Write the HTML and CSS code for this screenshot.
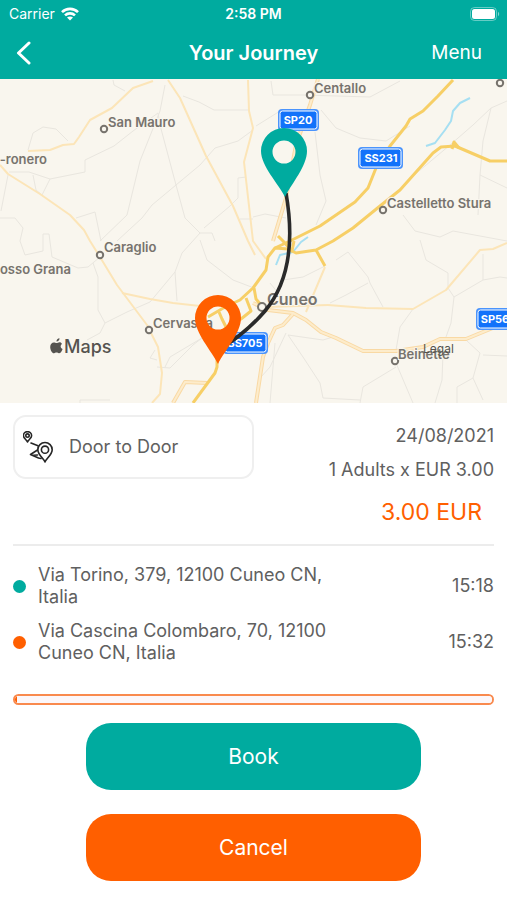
FILE: index.html
```html
<!DOCTYPE html>
<html lang="en">
<head>
  <meta charset="UTF-8" />
  <meta name="viewport" content="width=device-width, initial-scale=1.0"/>
  <title>Your Journey</title>
  <link rel="stylesheet" href="styles.css">
</head>
<body>
<header class="header">
  <div class="status">
    <div class="carrier">
      <span>Carrier</span>
      <svg width="18" height="14" viewBox="0 0 18 14" fill="none" stroke="#fff" stroke-width="2.6">
        <path d="M1 5.2C5.4.8 12.6.8 17 5.2"/>
        <path d="M4 8.4c2.8-2.7 7.2-2.7 10 0"/>
        <path d="M9 13.6 6 10.6c1.7-1.5 4.3-1.5 6 0z" fill="#fff" stroke="none"/>
      </svg>
    </div>
    <span class="clock">2:58 PM</span>
    <svg class="battery" width="30" height="14" viewBox="0 0 30 14">
      <rect x="0.5" y="0.5" width="26" height="13" rx="4" fill="none" stroke="#fff" stroke-opacity="0.4"/>
      <rect x="2" y="2" width="23" height="10" rx="2.5" fill="#fff"/>
      <path d="M28 4.8c1.6.8 1.6 3.6 0 4.4z" fill="#fff" fill-opacity="0.5"/>
    </svg>
  </div>
  <nav class="navbar">
    <button class="back" type="button" aria-label="Back">
      <svg width="15" height="24" viewBox="0 0 15 24" fill="none" stroke="#fff" stroke-width="3" stroke-linecap="round" stroke-linejoin="round"><path d="M13 2 2.500 12 13 22"/></svg>
    </button>
    <h1>Your Journey</h1>
    <button class="menu" type="button">Menu</button>
  </nav>
</header>

<main>
  <svg class="map" viewBox="0 0 507 324" role="img" aria-label="Route map">
    <rect width="507" height="324" fill="#f9f6ee"/>

    <!-- minor roads -->
    <g class="minor">
      <path d="M113 1 114 6 125 12"/>
      <path d="M165 6 160 32 140 82 127 136 100 162"/>
      <path d="M158 34 160 46 176 106 185 139 200 154 212 154 215 162"/>
      <path d="M117 162 142 139 152 126 176 106 200 86 215 69 238 62 253 51"/>
      <path d="M183 17 199 23 214 31 248 31"/>
      <path d="M9 93 29 93 50 100 85 93 85 81 114 67 133 52 158 34"/>
      <path d="M28 71 33 54 43 48 56 50 68 62"/>
      <path d="M8 96 1 132M0 139 15 139 23 149 20 162M76 139 95 133 101 162M33 96 36 111 42 116 50 100"/>
      <path d="M204 149 230 127 238 119 238 99 246 98M240 140 253 140"/>
      <path d="M20 162 25 176 43 172 43 155 49 155 52 178 78 189 88 188 100 178"/>
      <path d="M93 184 98 198 98 231 105 244 100 254 87 261"/>
      <path d="M105 244 127 233 150 223 175 193 182 174 200 154M175 193 177 222"/>
      <path d="M200 161 207 181 233 201 254 209"/>
      <path d="M155 271 150 279 157 281M157 288 170 289 193 266 202 259 170 278 165 288M80 324 80 321 110 321"/>
      <path d="M271 2 273 16 303 16 370 18 400 2M256 47 280 32"/>
      <path d="M315 53 320 96 326 122 316 146M321 31 336 49 360 59 386 62 410 47"/>
      <path d="M507 22 491 29 473 46 450 66 413 97M491 29 483 62 480 96 507 109M480 96 478 136"/>
      <path d="M403 136 415 152 440 158 453 152 507 162M253 138 265 135 286 139"/>
      <path d="M336 181 348 173 368 198 370 204 383 228M368 204 346 216 330 224"/>
      <path d="M420 161 426 181 448 194 448 209 454 218 451 244 446 258"/>
      <path d="M454 218 483 201 500 198 507 199M483 201 483 175M413 230 400 248 396 271"/>
      <path d="M288 256 303 278 320 304 323 319 360 321M288 256 323 261 333 258M286 254 270 288 261 298"/>
      <path d="M283 201 303 198 325 187M270 204 283 220M275 264 270 324"/>
      <path d="M396 288 363 308 360 324M396 284 413 324M443 274 442 301 435 324"/>
      <path d="M466 261 480 274 473 299 483 321M473 299 457 308 457 324M483 276 507 277"/>
    </g>

    <!-- water -->
    <g class="water">
      <path d="M470 19 460 24 453 32 451 42 445 51 435 64 426 67"/>
      <path d="M308 158 301 163 293 173 280 176 276 186"/>
    </g>

    <!-- local roads -->
    <g class="local">
      <path d="M153 2 133 9 112 29 90 41 79 58 74 65 63 66 50 71 28 72"/>
      <path d="M168 1 180 19 206 77 233 127 248 162 255 176"/>
      <path d="M248 1 249 32 253 49 244 83 253 162 266 180"/>
      <path d="M0 86 8 95 40 115 70 136 84 151 90 162 100 178 117 206 147 246 158 268 162 294 160 315 152 324"/>
      <path d="M122 214 150 220 173 224 200 227"/>
      <path d="M328 226 366 229 413 230 446 211 480 171 493 170 507 164"/>
      <path d="M325 188 306 233M267 228 328 226"/>
    </g>

    <!-- provincial roads -->
    <g class="prov-edge">
      <path d="M273 162 286 119 296 66 310 26 318 0"/>
      <path d="M253 224 268 231 293 234 306 241 321 253 336 259 363 272 396 272 423 268 440 260 466 260 483 253 507 243"/>
      <path d="M293 235 283 246 275 249 268 264 263 278 256 324"/>
      <path d="M207 304 185 303 173 324"/>
    </g>
    <g class="prov-fill">
      <path d="M273 162 286 119 296 66 310 26 318 0"/>
      <path d="M253 224 268 231 293 234 306 241 321 253 336 259 363 272 396 272 423 268 440 260 466 260 483 253 507 243"/>
      <path d="M293 235 283 246 275 249 268 264 263 278 256 324"/>
      <path d="M207 304 185 303 173 324"/>
    </g>

    <!-- main roads -->
    <g class="trunk">
      <path d="M453 1 438 17 423 32 410 40 406 47 390 67 376 89 368 109 355 123 320 147 290 162 275 169"/>
      <path d="M507 82 490 82 455 67 441 68 433 74 400 111 380 127 353 149 333 162 316 171 296 174 288 170 275 169 268 178 266 191 253 209 240 221 225 228 208 238"/>
      <path d="M452 70 454 63 459 69M316 171 325 187M278 157 283 162 292 172 294 162"/>
      <path d="M254 209 256 220 262 227M246 219 251 232 241 240 232 245M219 233 222 240 226 248 218 260"/>
      <path d="M217 278 217 288 215 294 193 324"/>
    </g>

    <!-- towns -->
    <g class="town-dot">
      <circle cx="104" cy="50" r="3.200"/>
      <circle cx="310" cy="16" r="3.200"/>
      <circle cx="500" cy="4" r="3.200"/>
      <circle cx="383" cy="131" r="3.200"/>
      <circle cx="100" cy="176" r="3.200"/>
      <circle cx="149" cy="251" r="3.200"/>
      <circle cx="262" cy="228" r="4"/>
      <circle cx="395" cy="282" r="3.200"/>
    </g>
    <g class="town">
      <text x="108" y="48">San Mauro</text>
      <text x="47" y="85" text-anchor="end">-ronero</text>
      <text x="314" y="14">Centallo</text>
      <text x="387" y="129">Castelletto Stura</text>
      <text x="104" y="173">Caraglio</text>
      <text x="71" y="195" text-anchor="end">osso Grana</text>
      <text x="153" y="249">Cervasca</text>
      <text x="398" y="280">Beinette</text>
      <text class="city" x="267" y="226">Cuneo</text>
    </g>
    <a href="#legal"><text class="legal" x="423" y="274">Legal</text></a>

    <!-- road signs -->
    <g class="sign">
      <rect class="halo" x="278" y="30" width="41" height="22" rx="4"/>
      <rect x="280" y="32" width="37" height="18" rx="2.500"/>
      <text x="298" y="45">SP20</text>
      <rect class="halo" x="358" y="68" width="45" height="22" rx="4"/>
      <rect x="360" y="70" width="41" height="18" rx="2.500"/>
      <text x="381" y="83">SS231</text>
      <rect class="halo" x="476" y="229" width="41" height="22" rx="4"/>
      <rect x="478" y="231" width="37" height="18" rx="2.500"/>
      <text x="495" y="244">SP56</text>
      <rect class="halo" x="223" y="253" width="45" height="22" rx="4"/>
      <rect x="225" y="255" width="41" height="18" rx="2.500"/>
      <text x="245" y="268">SS705</text>
    </g>

    <!-- journey -->
    <path d="M286 114C294 160 290 202 265 232 252 247 238 259 220 270" fill="none" stroke="#2a2a2a" stroke-width="3.600"/>
    <path fill="#00ab9f" fill-rule="evenodd" d="M285 118C278 104 261 87 261 72a23 23 0 0 1 46 0c0 15-15 32-22 46zM284 61.500a11.500 11.500 0 1 0 0 23 11.500 11.500 0 0 0 0-23z"/>
    <path fill="#ff5f00" fill-rule="evenodd" d="M218 285C211 271 195 254 195 239a23 23 0 0 1 46 0c0 15-16 32-23 46zM218 227.500a11.500 11.500 0 1 0 0 23 11.500 11.500 0 0 0 0-23z"/>

    <!-- map provider -->
    <path fill="#55534f" d="M59.500 259.200c.2 1.700-1.400 3.400-3 3.300-.2-1.700 1.300-3.200 3-3.300zM62 264.900c-2 1.300-1.700 4.100.6 5-.7 2.100-2 4.300-3.700 4.300-1 0-1.300-.6-2.400-.6s-1.500.6-2.400.6c-2.200 0-3.900-3.600-3.900-6.300 0-2.900 1.800-4.500 3.700-4.500 1.100 0 1.900.7 2.700.7.700 0 1.700-.8 3-.8 1 0 1.900.6 2.400 1.600z"/>
    <text class="provider" x="64" y="274">Maps</text>
  </svg>

  <section class="summary">
    <div class="service">
      <svg width="32" height="32" viewBox="0 0 32 32" fill="none" stroke="#262626" stroke-width="1.600" stroke-linejoin="round" stroke-linecap="round">
        <path d="M4.500 11C3.500 8.500.4 7.200.4 4.700a4.100 4.100 0 0 1 8.200 0C8.600 7.200 5.500 8.500 4.500 11z"/>
        <circle cx="4.500" cy="4.600" r="1.700"/>
        <path d="M8 12 15 14.800M14.500 19 7.500 23.500l8 3.500 2.500.5M14.500 24l-4 .2"/>
        <path d="M22 31c-1.500-3.500-7.200-7.500-7.200-12.300a7.200 7.200 0 0 1 14.400 0C29.200 23.500 23.500 27.500 22 31z"/>
        <circle cx="22" cy="18.700" r="3.600"/>
      </svg>
      <span>Door to Door</span>
    </div>
    <div class="fare">
      <div>24/08/2021</div>
      <div>1 Adults x EUR 3.00</div>
      <div class="total">3.00 EUR</div>
    </div>
  </section>

  <ul class="stops">
    <li><span class="dot start"></span><span class="address">Via Torino, 379, 12100 Cuneo CN, Italia</span><time>15:18</time></li>
    <li><span class="dot end"></span><span class="address">Via Cascina Colombaro, 70, 12100 Cuneo CN, Italia</span><time>15:32</time></li>
  </ul>

  <progress class="progress" value="0.5" max="100" aria-label="Time left to book"></progress>

  <div class="actions">
    <button class="book" type="button">Book</button>
    <button class="cancel" type="button">Cancel</button>
  </div>
</main>
</body>
</html>
```
FILE: styles.css
```css
* { box-sizing: border-box; }
body { font-family: Inter, "Liberation Sans", sans-serif; margin: 0; background: #fff; color: #606060; font-size: 18px; line-height: 22px; }
button { font: inherit; border: 0; padding: 0; background: none; color: #fff; cursor: pointer; }
svg { display: block; }

.header { background: #00ab9f; color: #fff; }
.status { display: grid; grid-template-columns: 1fr auto 1fr; align-items: center; height: 27px; padding: 0 7px; font-size: 14px; }
.carrier { display: flex; align-items: center; gap: 6px; padding-left: 2px; }
.clock { font-weight: 600; }
.battery { justify-self: end; }
.navbar { display: grid; grid-template-columns: 1fr auto 1fr; align-items: center; height: 52px; padding: 0 16px; font-size: 19px; }
.navbar h1 { margin: 0; font-size: 20px; font-weight: 600; }
.back { justify-self: start; }
.menu { justify-self: end; margin-right: 9px; }

.map { width: 100%; height: auto; }
.minor, .local, .trunk, .water, .prov-edge, .prov-fill { fill: none; stroke-linejoin: round; }
.minor { stroke: #e9e6df; stroke-width: 1; }
.water { stroke: #a6dff2; stroke-width: 2; }
.local { stroke: #fce5b8; stroke-width: 2; }
.prov-edge { stroke: #f9d9a4; stroke-width: 4; }
.prov-fill { stroke: #fdeccb; stroke-width: 2; }
.trunk { stroke: #f7cf66; stroke-width: 3; }
.town-dot { fill: #f9f6ee; stroke: #77736d; stroke-width: 2; }
.town { fill: #77736d; stroke: #f9f6ee; stroke-width: 2; paint-order: stroke; font-size: 13px; font-weight: 600; }
.city { font-size: 16px; }
.legal { fill: #55534f; font-size: 12px; }
.sign rect { fill: #1272fa; stroke: #fff; stroke-width: 1; }
.sign .halo { fill: #4b94fc; stroke: none; }
.sign text { fill: #fff; font-size: 11px; font-weight: 700; text-anchor: middle; }
.provider { fill: #55534f; font-size: 18px; font-weight: 500; }

.summary { display: grid; grid-template-columns: 1fr 1fr; align-items: start; margin: 0 13px; padding: 12px 0 21px; border-bottom: 2px solid #ececec; }
.service { display: flex; align-items: center; gap: 14px; height: 64px; padding: 0 8px; border: 2px solid #efefef; border-radius: 13px; }
.fare { display: grid; gap: 12px; padding-top: 10px; text-align: right; }
.total { padding: 8px 12px 0 0; color: #ff5f00; font-size: 23px; }

.stops { display: grid; gap: 12px; margin: 0; padding: 18px 13px 30px; list-style: none; }
.stops li { display: flex; align-items: center; gap: 12px; }
.dot { width: 13px; height: 13px; border-radius: 50%; }
.start { background: #00ab9f; }
.end { background: #ff5f00; }
.address { max-width: 300px; }
.stops time { margin-left: auto; }

.progress { appearance: none; display: block; width: calc(100% - 26px); height: 11px; margin: 0 13px; border: 2px solid #f98a4e; border-radius: 6px; overflow: hidden; background: #fbf7fa; }
.progress::-webkit-progress-bar { background: #fbf7fa; }
.progress::-webkit-progress-value { background: #ff5f00; }

.actions { display: grid; gap: 24px; justify-content: center; grid-template-columns: 66%; padding: 18px 0; font-size: 21px; }
.actions button { height: 67px; border-radius: 25px; }
.book { background: #00ab9f; }
.cancel { background: #ff5f00; }
```
